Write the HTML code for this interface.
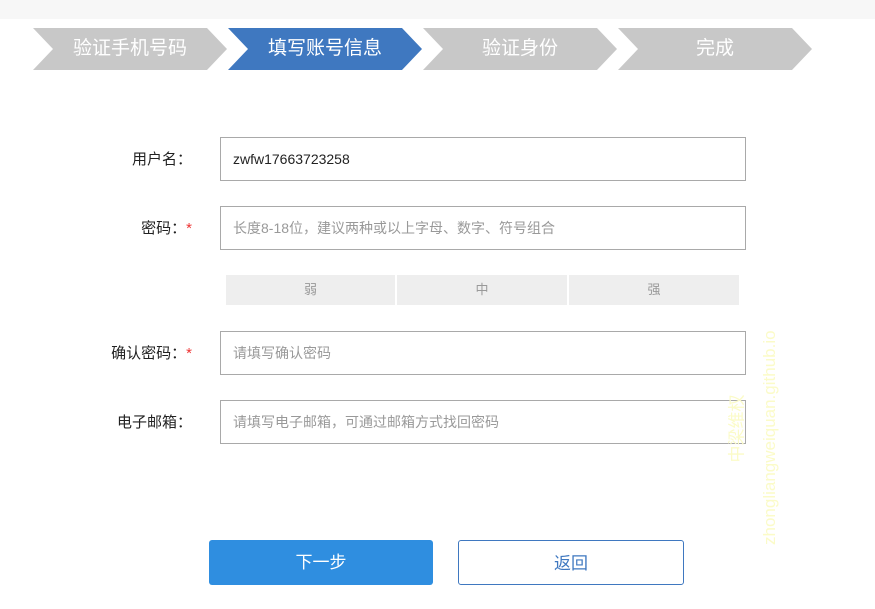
<!DOCTYPE html>
<html><head><meta charset="utf-8"><style>
body{margin:0;width:875px;height:609px;background:#fff;font-family:"Liberation Sans","Noto Sans CJK SC",sans-serif;position:relative;overflow:hidden}
.top{position:absolute;left:0;top:0;width:875px;height:19px;background:#f7f7f7}
.step{position:absolute;top:28px;width:194px;height:42px;color:#fff;font-size:19px;line-height:42px;text-align:center;clip-path:polygon(0 0,174px 0,194px 21px,174px 42px,0 42px,20px 21px)}
.lbl{position:absolute;width:80px;text-align:right;font-size:15px;color:#222;left:112px}
.lbl i{color:#e33;font-style:normal}
.inp{position:absolute;left:220px;width:512px;height:42px;border:1px solid #a9a9a9;font-size:14px;line-height:42px;padding-left:12px;color:#999}
.bar{position:absolute;top:275px;height:30px;background:#eee;color:#999;font-size:13px;line-height:30px;text-align:center}
.btn{position:absolute;top:540px;width:224px;height:45px;font-size:17px;line-height:45px;text-align:center;border-radius:3px;box-sizing:border-box}
</style></head><body>
<div class="top"></div>
<div class="step" style="left:33px;background:#c8c8c8">验证手机号码</div>
<div class="step" style="left:228px;background:#3f78c0">填写账号信息</div>
<div class="step" style="left:423px;background:#c8c8c8">验证身份</div>
<div class="step" style="left:618px;background:#c8c8c8">完成</div>
<div class="lbl" style="top:148px">用户名：</div>
<div class="inp" style="top:137px;color:#222">zwfw17663723258</div>
<div class="lbl" style="top:217px">密码：<i>*</i></div>
<div class="inp" style="top:206px">长度8-18位，建议两种或以上字母、数字、符号组合</div>
<div class="bar" style="left:226px;width:169px">弱</div>
<div class="bar" style="left:397px;width:170px">中</div>
<div class="bar" style="left:569px;width:170px">强</div>
<div class="lbl" style="top:342px;left:100px;width:92px">确认密码：<i>*</i></div>
<div class="inp" style="top:331px">请填写确认密码</div>
<div class="lbl" style="top:411px;left:100px;width:92px">电子邮箱：</div>
<div class="inp" style="top:400px">请填写电子邮箱，可通过邮箱方式找回密码</div>
<div style="position:absolute;left:650px;top:415px;width:240px;transform:rotate(-90deg);color:#fbfbc8;font-size:17px;white-space:nowrap">zhongliangweiquan.github.io</div>
<div style="position:absolute;left:700px;top:415px;width:70px;transform:rotate(-90deg);color:#fbfbc8;font-size:17px;white-space:nowrap">中梁维权</div>
<div class="btn" style="left:209px;background:#2f8ee0;color:#fff">下一步</div>
<div class="btn" style="left:458px;width:226px;border:1px solid #3f78c0;color:#3f78c0;background:#fff">返回</div>
</body></html>
